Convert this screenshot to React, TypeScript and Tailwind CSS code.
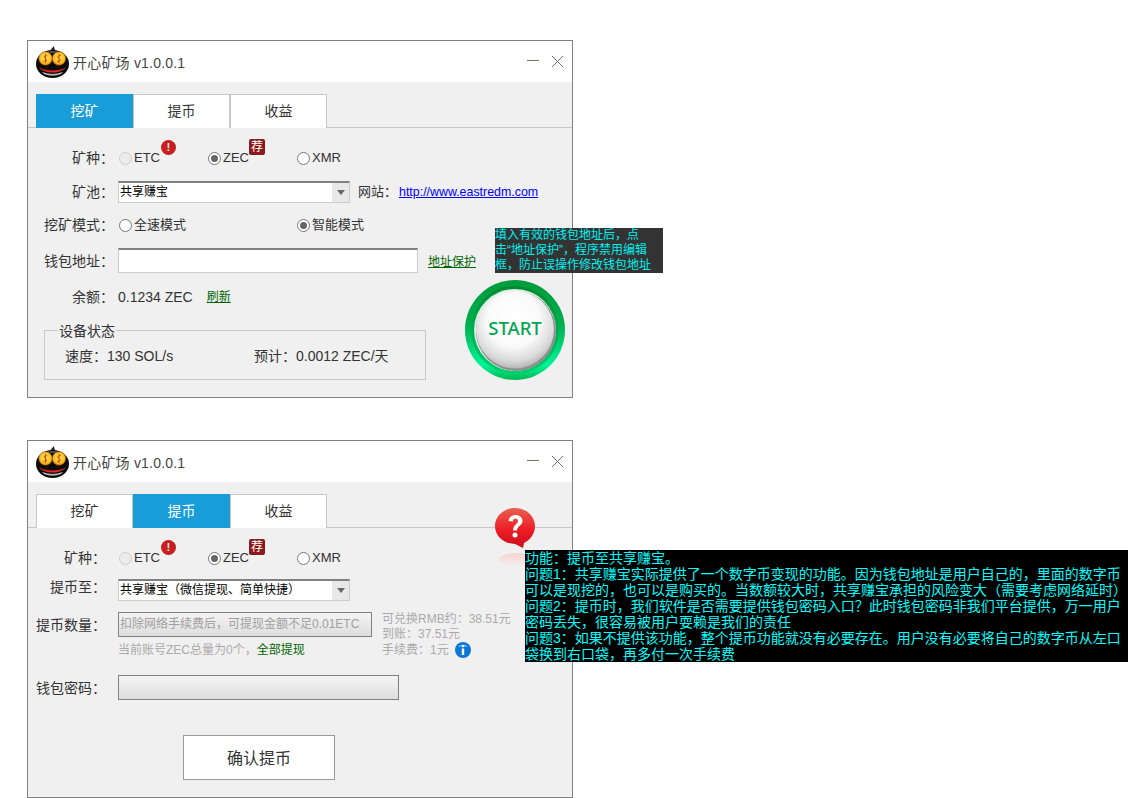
import type { ReactNode } from 'react';

const tabNames = ['挖矿', '提币', '收益'];

const helpLines = [
  '功能：提币至共享赚宝。',
  '问题1：共享赚宝实际提供了一个数字币变现的功能。因为钱包地址是用户自己的，里面的数字币',
  '可以是现挖的，也可以是购买的。当数额较大时，共享赚宝承担的风险变大（需要考虑网络延时）',
  '问题2：提币时，我们软件是否需要提供钱包密码入口？此时钱包密码非我们平台提供，万一用户',
  '密码丢失，很容易被用户耍赖是我们的责任',
  '问题3：如果不提供该功能，整个提币功能就没有必要存在。用户没有必要将自己的数字币从左口',
  '袋换到右口袋，再多付一次手续费',
];

const tipLines = ['填入有效的钱包地址后，点', '击“地址保护”，程序禁用编辑', '框，防止误操作修改钱包地址'];

const MascotIcon = () => (
  <svg width="34" height="34" viewBox="0 0 34 34" aria-hidden="true">
    <defs>
      <radialGradient id="coin" cx="50%" cy="45%" r="55%">
        <stop offset="0%" stopColor="#ffe95c" />
        <stop offset="70%" stopColor="#fbbf24" />
        <stop offset="100%" stopColor="#e08a12" />
      </radialGradient>
      <linearGradient id="lip" x1="0" y1="0" x2="0" y2="1">
        <stop offset="0%" stopColor="#ffffff" />
        <stop offset="100%" stopColor="#9a9a9a" />
      </linearGradient>
    </defs>
    <path d="M13 7 C14.500 5 16 3 18 1 C18 3 19 5 20 7 Z" fill="#222" />
    <ellipse cx="16.500" cy="19" rx="16.500" ry="14" fill="#0c0c0c" />
    <ellipse cx="16.500" cy="7" rx="6" ry="1.200" fill="#666" opacity="0.7" />
    <circle cx="9.500" cy="13.500" r="6.800" fill="url(#coin)" stroke="#7a4a00" strokeWidth="0.5" />
    <circle cx="23" cy="13.500" r="6.800" fill="url(#coin)" stroke="#7a4a00" strokeWidth="0.5" />
    <path d="M11.500 11 C9 9.500 7 12 9.500 13.500 C12 15 10 17.500 7.500 16 M9.500 9 V18" fill="none" stroke="#d9480f" strokeWidth="1" />
    <path d="M25 11 C22.500 9.500 20.500 12 23 13.500 C25.500 15 23.500 17.500 21 16 M23 9 V18" fill="none" stroke="#d9480f" strokeWidth="1" />
    <path d="M3 22.500 C10 26.500 23 26.500 30 22.500 C27 26 22 27.500 16.500 27.500 C11 27.500 6 26 3 22.500 Z" fill="#e8261b" />
    <path d="M6 27 C12 29.500 21 29.500 27 27 C23 32 10 32 6 27 Z" fill="url(#lip)" />
  </svg>
);

const StartButton = () => (
  <svg width="100" height="100" viewBox="0 0 100 100" aria-label="START">
    <defs>
      <linearGradient id="ring" x1="0" y1="0" x2="0" y2="1">
        <stop offset="0%" stopColor="#009a3c" />
        <stop offset="45%" stopColor="#00b050" />
        <stop offset="85%" stopColor="#00f59a" />
        <stop offset="100%" stopColor="#00b84f" />
      </linearGradient>
      <linearGradient id="ringInner" x1="0" y1="0" x2="0" y2="1">
        <stop offset="0%" stopColor="#008a2e" />
        <stop offset="100%" stopColor="#00d070" />
      </linearGradient>
      <radialGradient id="ball" cx="48%" cy="38%" r="62%">
        <stop offset="0%" stopColor="#ffffff" />
        <stop offset="55%" stopColor="#fafafa" />
        <stop offset="85%" stopColor="#d9d9d9" />
        <stop offset="100%" stopColor="#b5b5b5" />
      </radialGradient>
    </defs>
    <circle cx="50" cy="50" r="50" fill="url(#ring)" />
    <circle cx="50" cy="50" r="44" fill="url(#ringInner)" />
    <circle cx="50" cy="50" r="41" fill="#d7efe3" />
    <circle cx="51" cy="51" r="40" fill="#8f8f8f" />
    <circle cx="50" cy="49.500" r="39" fill="url(#ball)" />
    <text x="50" y="54.500" textAnchor="middle" fontFamily="'Noto Sans', sans-serif" fontWeight="500" fontSize="18.500" fill="#00a651">
      START
    </text>
  </svg>
);

const HelpBubble = () => (
  <svg width="44" height="64" viewBox="0 0 44 64" aria-hidden="true">
    <defs>
      <linearGradient id="bubble" x1="0" y1="0" x2="0" y2="1">
        <stop offset="0%" stopColor="#e8604f" />
        <stop offset="55%" stopColor="#ee1c25" />
        <stop offset="100%" stopColor="#c8101c" />
      </linearGradient>
      <linearGradient id="glow" x1="0" y1="0" x2="0" y2="1">
        <stop offset="0%" stopColor="#f9d4d2" />
        <stop offset="100%" stopColor="#f0f0f0" />
      </linearGradient>
    </defs>
    <ellipse cx="22" cy="52" rx="17" ry="7" fill="url(#glow)" />
    <path d="M21 0 C32 0 41 8 41 18 C41 26 36 32 30 35 L29 40 L21 36 C10 36 1 28 1 18 C1 8 10 0 21 0 Z" fill="url(#bubble)" />
    <path
      d="M14.500 13 C15 9 18 7 21.500 7 C25.500 7 28.500 9.500 28.500 13 C28.500 17.500 23 18 23 22.500 H19 C19 16.500 24 16 24 13 C24 11.500 23 10.500 21.500 10.500 C20 10.500 19 11.500 18.800 13.500 Z"
      fill="#fff"
    />
    <circle cx="21" cy="27" r="2.500" fill="#fff" />
  </svg>
);

const InfoIcon = () => (
  <svg width="16" height="16" viewBox="0 0 16 16" aria-hidden="true">
    <circle cx="8" cy="8" r="8" fill="#0b78d8" />
    <path d="M3 5 C5 2 11 2 13 5 C10 4 6 4 3 5 Z" fill="#7fc0f5" />
    <rect x="6.800" y="3" width="2.400" height="2.200" fill="#fff" />
    <rect x="6.800" y="6.500" width="2.400" height="6.500" fill="#fff" />
  </svg>
);

const WindowTitle = () => (
  <div className="flex h-[41px] items-center bg-white pl-[8px] pr-[8px]">
    <MascotIcon />
    <span className="ml-[3px] translate-y-[1.500px] text-[14px] tracking-[0.2px] text-[#444]">开心矿场 v1.0.0.1</span>
    <div className="ml-auto flex items-center gap-[12px]">
      <span className="h-px w-[12px] -translate-y-[1px] bg-[#8a6d55]" />
      <svg width="13" height="13" viewBox="0 0 13 13" aria-hidden="true">
        <path d="M1 1 L12 12 M12 1 L1 12" stroke="#6b6b6b" strokeWidth="1" fill="none" />
      </svg>
    </div>
  </div>
);

const Tabs = ({ active }: { active: number }) => (
  <div className="mt-[12px] flex h-[34px] border-b border-[#c8c8c8] pl-[8px]">
    {tabNames.map((name, i) => (
      <div
        key={name}
        className={
          i === active
            ? 'flex h-[34px] w-[97px] items-center justify-center bg-[#189dd8] text-[14px] text-white'
            : 'flex h-[34px] w-[97px] items-center justify-center border border-b-0 border-[#c8c8c8] bg-white text-[14px] text-[#333]'
        }
      >
        {name}
      </div>
    ))}
  </div>
);

const Label = ({ children, className }: { children: ReactNode; className: string }) => (
  <span className={`block shrink-0 text-right text-[14px] leading-[20px] text-[#333] ${className}`}>{children}</span>
);

const Radio = ({ label, checked, disabled, badge }: { label: string; checked?: boolean; disabled?: boolean; badge?: ReactNode }) => (
  <div className="relative flex items-center gap-[2px] text-[13px] text-[#333]">
    <span
      className={
        disabled
          ? 'flex h-[13px] w-[13px] items-center justify-center rounded-full border border-[#ccc] bg-[#ececec]'
          : 'flex h-[13px] w-[13px] items-center justify-center rounded-full border border-[#777] bg-white'
      }
    >
      {checked && <span className="h-[7px] w-[7px] rounded-full bg-[#666]" />}
    </span>
    <span>{label}</span>
    {badge}
  </div>
);

const CoinOptions = () => (
  <div className="grid grid-cols-[89px_89px_89px]">
    <Radio
      label="ETC"
      disabled
      badge={
        <span className="absolute left-[42px] -top-[8px] flex h-[15px] w-[15px] items-center justify-center rounded-full bg-[#c81e1e] text-[10px] font-bold leading-none text-white">
          !
        </span>
      }
    />
    <Radio
      label="ZEC"
      checked
      badge={
        <span className="absolute left-[41px] -top-[9px] flex h-[16px] w-[16px] items-center justify-center rounded-[2px] bg-[#8b1a1a] text-[12px] leading-none text-white">
          荐
        </span>
      }
    />
    <Radio label="XMR" />
  </div>
);

const ComboBox = ({ value }: { value: string }) => (
  <div className="flex h-[22px] w-[232px] items-stretch border border-t-2 border-[#ccc] border-t-[#808080] bg-white">
    <span className="flex-1 pl-px text-[12px] leading-[19px] text-black">{value}</span>
    <span className="flex w-[17px] items-center justify-center bg-[#e8e8e8]">
      <span className="h-0 w-0 border-x-[4.500px] border-t-[5px] border-x-transparent border-t-[#666]" />
    </span>
  </div>
);

const MineWindow = () => (
  <section className="relative h-[358px] w-[546px] border border-[#808080] bg-[#f0f0f0]">
    <WindowTitle />
    <Tabs active={0} />

    <div className="mt-[18px] flex h-[24px] items-center">
      <Label className="w-[86px]">矿种：</Label>
      <div className="ml-[5px]">
        <CoinOptions />
      </div>
    </div>

    <div className="mt-[10px] flex h-[24px] items-center">
      <Label className="w-[86px]">矿池：</Label>
      <div className="ml-[4px]">
        <ComboBox value="共享赚宝" />
      </div>
      <span className="ml-[8px] text-[13px] text-[#333]">网站：</span>
      <a className="ml-[2px] text-[12.400px] text-[#0000ff] underline">http://www.eastredm.com</a>
    </div>

    <div className="mt-[9px] flex h-[24px] items-center">
      <Label className="w-[86px]">挖矿模式：</Label>
      <div className="ml-[5px] grid grid-cols-[178px_89px]">
        <Radio label="全速模式" />
        <Radio label="智能模式" checked />
      </div>
    </div>

    <div className="mt-[11px] flex h-[25px] items-center">
      <Label className="w-[86px]">钱包地址：</Label>
      <div className="ml-[4px] h-[25px] w-[300px] border border-t-2 border-[#ccc] border-t-[#808080] bg-white" />
      <a className="ml-[10px] mt-[2px] text-[12px] text-[#006400] underline">地址保护</a>
    </div>

    <div className="mt-[12px] flex h-[24px] items-center text-[14px] text-[#333]">
      <Label className="w-[86px]">余额：</Label>
      <span className="ml-[4px]">0.1234 ZEC</span>
      <a className="ml-[14px] text-[12px] text-[#006400] underline">刷新</a>
    </div>

    <div className="relative ml-[16px] mt-[21px] flex h-[50px] w-[382px] items-center border border-[#c8c8c8] pl-[20px] pt-[3px] text-[14px] text-[#333]">
      <span className="absolute -top-[10px] left-[13px] bg-[#f0f0f0] px-px text-[14px] leading-[20px]">设备状态</span>
      <span className="w-[189px]">速度：130 SOL/s</span>
      <span>预计：0.0012 ZEC/天</span>
    </div>

    <div className="absolute left-[437px] top-[239px]">
      <StartButton />
    </div>
    <div className="absolute left-[467px] top-[187px] h-[45px] w-[168px] bg-[#333] text-[12px] leading-[15px] text-[#00f0f0]">
      {tipLines.map((line) => (
        <div key={line} className="whitespace-nowrap">
          {line}
        </div>
      ))}
    </div>
  </section>
);

const WithdrawWindow = () => (
  <section className="relative h-[358px] w-[546px] border border-[#808080] bg-[#f0f0f0]">
    <WindowTitle />
    <Tabs active={1} />

    <div className="mt-[18px] flex h-[24px] items-center">
      <Label className="w-[78px]">矿种：</Label>
      <div className="ml-[13px]">
        <CoinOptions />
      </div>
    </div>

    <div className="mt-[9px] flex items-start">
      <Label className="-mt-[2px] w-[78px]">提币至：</Label>
      <div className="ml-[12px]">
        <ComboBox value="共享赚宝（微信提现、简单快捷）" />
      </div>
    </div>

    <div className="mt-[11px] flex items-start">
      <Label className="mt-[3px] w-[78px]">提币数量：</Label>
      <div className="ml-[12px] w-[254px]">
        <div className="h-[25px] w-[254px] whitespace-nowrap border border-[#808080] bg-gradient-to-b from-[#f4f4f4] to-[#dedede] pl-px text-[12px] leading-[23px] text-[#a0a0a0]">
          扣除网络手续费后，可提现金额不足0.01ETC
        </div>
        <div className="mt-[5px] whitespace-nowrap text-[12px] leading-[16px] text-[#aaa]">
          当前账号ZEC总量为0个，<a className="text-[#006400]">全部提现</a>
        </div>
      </div>
      <div className="ml-[10px] whitespace-nowrap text-[12px] leading-[15px] text-[#aaa]">
        <div>可兑换RMB约：38.51元</div>
        <div>到账：37.51元</div>
        <div className="flex items-center gap-[6px]">
          手续费：1元
          <InfoIcon />
        </div>
      </div>
    </div>

    <div className="mt-[17px] flex h-[25px] items-center">
      <Label className="w-[78px]">钱包密码：</Label>
      <div className="ml-[12px] h-[25px] w-[281px] border border-[#808080] bg-gradient-to-b from-[#f4f4f4] to-[#dedede]" />
    </div>

    <button className="ml-[155px] mt-[35px] h-[45px] w-[152px] border border-[#999] bg-white pt-[2px] text-[16px] text-[#333]">确认提币</button>

    <div className="absolute left-[466px] top-[67px]">
      <HelpBubble />
    </div>
    <div className="absolute left-[497px] top-[109px] z-10 h-[112px] w-[603px] bg-black text-[14px] leading-[16px] text-[#00ffff]">
      {helpLines.map((line) => (
        <div key={line} className="whitespace-nowrap">
          {line}
        </div>
      ))}
    </div>
  </section>
);

export default function App() {
  return (
    <div className="flex h-[798px] w-[1128px] flex-col gap-[42px] overflow-hidden bg-white pl-[27px] pt-[40px] font-['Liberation_Sans','Noto_Sans_CJK_SC',sans-serif]">
      <MineWindow />
      <WithdrawWindow />
    </div>
  );
}
